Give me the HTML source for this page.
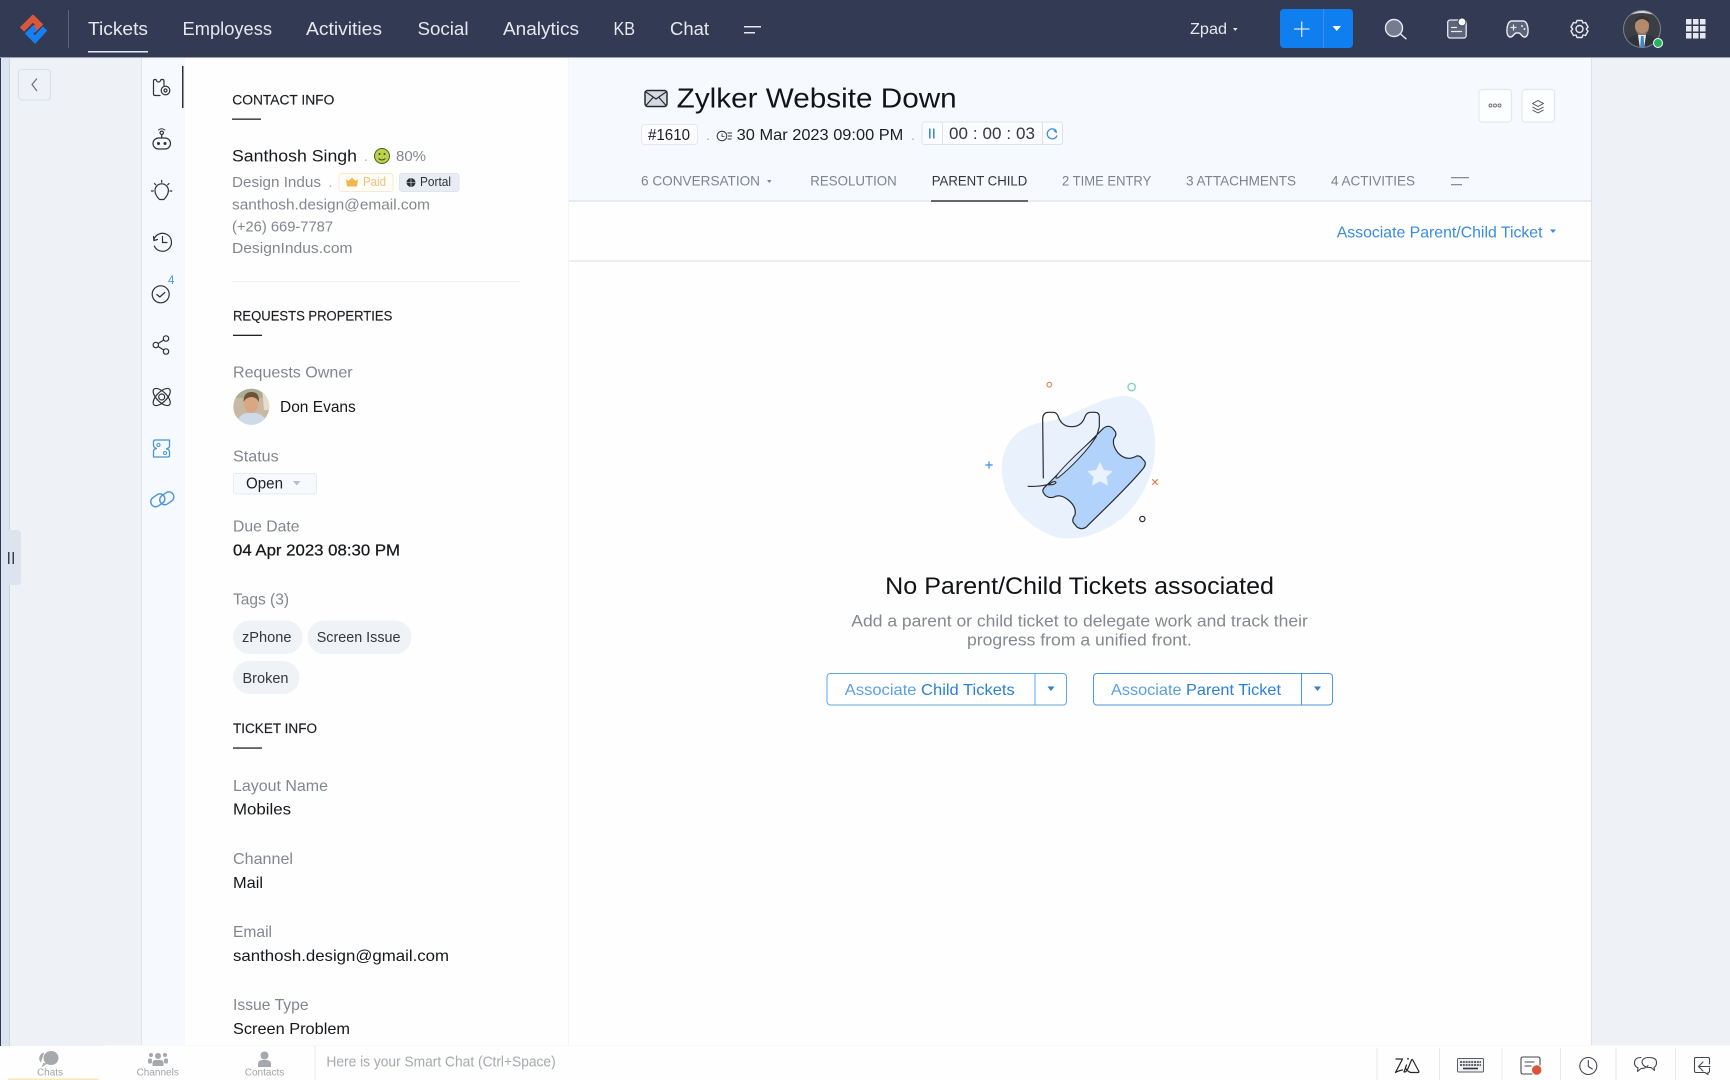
<!DOCTYPE html>
<html lang="en">
<head>
<meta charset="utf-8">
<title>Zylker Website Down</title>
<style>
html,body{margin:0;padding:0;background:#fff;width:1730px;height:1080px;overflow:hidden}
svg{display:block}
text{font-family:"Liberation Sans",Arial,sans-serif}
.n{font-size:18.5px;fill:#e6e8ee}
.h{font-size:13.5px;fill:#1c1e22;stroke:#1c1e22;stroke-width:.15}
.l{font-size:16px;fill:#82868f}
.v{font-size:16px;fill:#15171a}
.g{font-size:15px;fill:#83878e}
.t{font-size:14px;fill:#7f838a}
.ic{fill:none;stroke:#2f3237;stroke-width:1.2;stroke-linecap:round;stroke-linejoin:round}
.bl{fill:none;stroke:#4a94dc;stroke-width:1.3;stroke-linecap:round;stroke-linejoin:round}
.w{fill:none;stroke:#e8eaf0;stroke-width:1.4;stroke-linecap:round;stroke-linejoin:round}
.b{fill:none;stroke:#44474d;stroke-width:1.1;stroke-linecap:round;stroke-linejoin:round}
</style>
</head>
<body>
<svg width="1730" height="1080" viewBox="0 0 1730 1080" xmlns="http://www.w3.org/2000/svg">
<!-- backgrounds -->
<rect width="1730" height="1080" fill="#eef2f6"/>
<rect x="0" y="57" width="1" height="1023" fill="#333b54"/>
<rect x="1" y="57" width="8" height="1023" fill="#dbe4f1"/>
<rect x="9" y="57" width="1" height="1023" fill="#ccd4df"/>
<rect x="141" y="57" width="44" height="1023" fill="#f6f9fe"/>
<rect x="141" y="57" width="1" height="1023" fill="#e0e5eb"/>
<rect x="185" y="57" width="383" height="1023" fill="#fefefe"/>
<rect x="568" y="57" width="1" height="1023" fill="#f4f5f7"/>
<rect x="569" y="57" width="1022" height="1023" fill="#fefefe"/>
<rect x="569" y="57" width="1022" height="143" fill="#f6f9fe"/>
<rect x="569" y="200" width="1022" height="2" fill="#e8ecf2"/>
<rect x="569" y="260" width="1022" height="2" fill="#eceef2"/>
<rect x="1591" y="57" width="1" height="1023" fill="#dde2ea"/>

<!-- header -->
<rect width="1730" height="57" fill="#333b54"/>
<rect y="57" width="1730" height="1" fill="#9aa0ad"/>
<path d="M22 29.500 L33 18.500 L39 24.500 L33 30.500" fill="none" stroke="#d9583c" stroke-width="6"/>
<path d="M45 28.500 L35 39.500 L29 33.500 L35 27.500" fill="none" stroke="#1780f0" stroke-width="6"/>
<rect x="68" y="10" width="1" height="38" fill="#5a6278"/>
<text class="n" x="88" y="35" textLength="60" lengthAdjust="spacingAndGlyphs">Tickets</text>
<rect x="88" y="51" width="60" height="1.500" fill="#e6e8ee"/>
<text class="n" x="182.500" y="35" textLength="89.500" lengthAdjust="spacingAndGlyphs">Employess</text>
<text class="n" x="306" y="35" textLength="76" lengthAdjust="spacingAndGlyphs">Activities</text>
<text class="n" x="417.500" y="35" textLength="51" lengthAdjust="spacingAndGlyphs">Social</text>
<text class="n" x="503" y="35" textLength="76" lengthAdjust="spacingAndGlyphs">Analytics</text>
<text class="n" x="613.500" y="35" textLength="21.500" lengthAdjust="spacingAndGlyphs">KB</text>
<text class="n" x="670" y="35" textLength="39" lengthAdjust="spacingAndGlyphs">Chat</text>
<rect x="744" y="26" width="17" height="1.500" fill="#e6e8ee"/><rect x="744" y="32" width="11" height="1.500" fill="#e6e8ee"/>
<text x="1190" y="34" font-size="16" fill="#e6e8ee" textLength="37" lengthAdjust="spacingAndGlyphs">Zpad</text>
<path d="M1233 28 h4.500 l-2.250 3z" fill="#e6e8ee"/>
<rect x="1280" y="9" width="73" height="39" rx="4" fill="#0f7ff0"/>
<rect x="1323" y="9" width="1" height="39" fill="#3a90ec"/>
<path d="M1294 29 h15.500 M1301.700 21.500 v15.500" stroke="#d9e8fb" stroke-width="1.300" fill="none"/>
<path d="M1332.500 26 h8.500 l-4.250 5z" fill="#fff"/>
<circle cx="1394" cy="28" r="8.500" fill="#757c90" stroke="#e8eaf0" stroke-width="1.400"/>
<path d="M1400.500 34 L1406 38.800" class="w"/>
<rect x="1447.700" y="20" width="18.500" height="18" rx="2.500" fill="#5c6479" stroke="#e8eaf0" stroke-width="1.300"/>
<path d="M1451.500 27.500 h5 M1451.500 31.500 h10" class="w" style="stroke-width:1.200"/>
<circle cx="1462" cy="22" r="4" fill="#fff" stroke="#333b54" stroke-width="1"/>
<path d="M1512 21 h11 c3 0 4.500 3 5 8 c.5 6-1.500 8-3.500 8 c-2.500 0-4-4-5.500-4 h-3 c-1.500 0-3 4-5.500 4 c-2 0-4-2-3.500-8 c.5-5 2-8 5-8z" class="w" style="fill:#5c6479"/>
<path d="M1511 27.500 h5 M1513.500 25 v5" class="w" style="stroke-width:1.200"/>
<circle cx="1522" cy="26" r="1" fill="#e8eaf0"/><circle cx="1524.500" cy="29" r="1" fill="#e8eaf0"/>
<path d="M1577 20.500 h5 l1 2.500 l2.500 -.5 l2.500 4.500 l-1.700 2 l1.700 2 l-2.500 4.500 l-2.500 -.5 l-1 2.500 h-5 l-1 -2.500 l-2.500 .5 l-2.500 -4.500 l1.700 -2 l-1.700 -2 l2.500 -4.500 l2.500 .5z" class="w"/>
<circle cx="1579.500" cy="29" r="3.500" class="w"/>
<!-- profile avatar -->
<defs>
<clipPath id="a1"><circle cx="1642" cy="29" r="18.500"/></clipPath>
<clipPath id="a2"><circle cx="251.300" cy="406.700" r="18"/></clipPath>
</defs>
<g clip-path="url(#a1)">
<rect x="1622" y="9" width="40" height="40" fill="#3b3e44"/>
<path d="M1630 10 h24 v5 q-12 -4 -24 0z" fill="#d8d6cf"/>
<ellipse cx="1642" cy="26" rx="7" ry="9" fill="#b48a6e"/>
<path d="M1635 23 q7 -8 14 0 l0 -4 q-7 -6 -14 0z" fill="#3a332e"/>
<path d="M1637 31 q5 4 10 0 l-1 4 h-8z" fill="#8a7a6c"/>
<path d="M1623 50 q2 -13 13 -15 h12 q11 2 13 15z" fill="#2f333b"/>
<path d="M1638 35 h8 l-2 14 h-4z" fill="#e8ecf0"/>
<path d="M1641 36 h2.500 l1 13 h-4.500z" fill="#3e86c8"/>
</g>
<circle cx="1642" cy="29" r="18.500" fill="none" stroke="#7a8092" stroke-width="1"/>
<circle cx="1658" cy="43" r="4.500" fill="#27b55c" stroke="#fff" stroke-width="1"/>
<g fill="#e6e8ee">
<rect x="1686" y="19" width="5.500" height="5.500"/><rect x="1693" y="19" width="5.500" height="5.500"/><rect x="1700" y="19" width="5.500" height="5.500"/>
<rect x="1686" y="26" width="5.500" height="5.500"/><rect x="1693" y="26" width="5.500" height="5.500"/><rect x="1700" y="26" width="5.500" height="5.500"/>
<rect x="1686" y="33" width="5.500" height="5.500"/><rect x="1693" y="33" width="5.500" height="5.500"/><rect x="1700" y="33" width="5.500" height="5.500"/>
</g>

<!-- back button -->
<rect x="18.500" y="69.500" width="32" height="30.500" rx="3" fill="#eef2f6" stroke="#d9dfe8" stroke-width="1"/>
<path d="M37 78.500 L32 84.500 L37 91" fill="none" stroke="#6a6f78" stroke-width="1.200"/>
<!-- collapse handle -->
<path d="M9 530 h8 q4 0 4 4 v47 q0 4 -4 4 h-8z" fill="#dde4ee"/>
<rect x="8" y="552" width="1.500" height="12" fill="#3c4048"/><rect x="12.500" y="552" width="1.500" height="12" fill="#3c4048"/>

<!-- rail icons -->
<rect x="182" y="66" width="1.500" height="42" fill="#333"/>
<path d="M160 95.500 h-5 q-1.500 0 -1.500 -1.500 v-13 q0 -1.500 1.500 -1.500 h1 q.8 2.500 2.500 2.500 q1.700 0 2.500 -2.500 h1.500 q1.500 0 1.500 1.500 v4.500" class="ic"/>
<circle cx="165.500" cy="90.500" r="4.300" class="ic" stroke-dasharray="2 .6"/><circle cx="165.500" cy="90.500" r="1.500" class="ic"/>
<rect x="153" y="138" width="17.500" height="11" rx="5.500" class="ic"/>
<circle cx="158.500" cy="143.500" r="1.500" fill="#2b2e33"/><circle cx="165" cy="143.500" r="1.500" fill="#2b2e33"/>
<path d="M161.700 138 v-3.500" class="ic"/><circle cx="161.700" cy="132.800" r="1.700" class="ic"/>
<path d="M158.500 130 q3.200 -2.500 6.400 0" class="ic" style="stroke-width:.9"/>
<path d="M159.500 199.500 q-4.500 -4.500 -4.500 -9 a6.700 6.700 0 0 1 13.400 0 q0 4.500 -4.500 9z" class="ic"/>
<path d="M151.500 191 h1.800 M170 191 h1.800 M154.500 183.500 l1.300 1.300 M169 183.500 l-1.300 1.300 M161.700 180.500 v1.800" class="ic"/>
<path d="M153.800 240 a9 9 0 1 1 .5 6" class="ic"/>
<path d="M153.500 236.500 l.5 4 l3.500 -1" class="ic"/>
<path d="M162.500 236.500 v6 h4.500" class="ic"/>
<circle cx="160.700" cy="294.300" r="8.500" class="ic"/>
<path d="M156.800 294.500 l3 2.500 l5 -4.500" class="ic"/>
<text x="168" y="284" font-size="11.500" fill="#4a9be0">4</text>
<circle cx="166" cy="338.500" r="2.700" class="ic"/><circle cx="155.800" cy="345" r="2.700" class="ic"/><circle cx="166" cy="351.500" r="2.700" class="ic"/>
<path d="M158.200 343.500 l5.500 -3.500 M158.200 346.500 l5.500 3.500" class="ic"/>
<g transform="translate(161.700 397)">
<ellipse rx="11" ry="5" transform="rotate(45)" class="ic"/>
<ellipse rx="11" ry="5" transform="rotate(-45)" class="ic"/>
<circle r="3" class="ic"/>
</g>
<path d="M155.500 440 h14 v6 q0 2 -3 2.800 q3 1 3 3 v3.700 q0 1.500 -1.500 1.500 h-14.500 v-6 q0 -1.800 3 -2.500 q-3 -1 -3 -3 v-4 q0 -1.500 2 -1.500z" class="bl"/>
<circle cx="158.500" cy="445" r="1.500" class="bl" style="stroke-width:1"/><circle cx="165" cy="453" r="1.500" class="bl" style="stroke-width:1"/>
<rect x="-7.500" y="-5" width="15" height="10" rx="5" transform="translate(157.800 500.300) rotate(-35)" class="bl" style="stroke-width:1.400"/>
<rect x="-7.500" y="-5" width="15" height="10" rx="5" transform="translate(166.800 498.300) rotate(-35)" class="bl" style="stroke-width:1.400"/>

<!-- contact info -->
<text class="h" x="232.300" y="104.500" textLength="102" lengthAdjust="spacingAndGlyphs">CONTACT INFO</text>
<rect x="232" y="118.500" width="29" height="1.300" fill="#222"/>
<text x="232" y="161.500" font-size="17" fill="#16181b" textLength="125" lengthAdjust="spacingAndGlyphs">Santhosh Singh</text>
<text x="364" y="161" font-size="14" fill="#a9adb3">.</text>
<circle cx="382" cy="156" r="7.500" fill="#b9d34a" stroke="#4b5a20" stroke-width="1"/>
<circle cx="379.500" cy="154" r="1" fill="#3b4718"/><circle cx="384.500" cy="154" r="1" fill="#3b4718"/>
<path d="M378.500 158.500 q3.500 3 7 0" fill="none" stroke="#3b4718" stroke-width="1"/>
<text x="396" y="161" font-size="14.500" fill="#85898f" textLength="30" lengthAdjust="spacingAndGlyphs">80%</text>
<text class="g" x="232" y="187" textLength="89" lengthAdjust="spacingAndGlyphs">Design Indus</text>
<text x="328.500" y="187" font-size="14" fill="#a9adb3">.</text>
<rect x="339" y="173.500" width="54" height="18" rx="2.500" fill="#fffdf8" stroke="#f8ead0" stroke-width="1"/>
<path d="M346 179 l2.500 2 l3.500 -3.500 l3.500 3.500 l2.500 -2 l-1 7.500 h-10z" fill="#f3b54a"/>
<text x="363" y="186" font-size="12.500" fill="#eec17a" textLength="23" lengthAdjust="spacingAndGlyphs">Paid</text>
<rect x="399.500" y="173.500" width="59.500" height="18" rx="2.500" fill="#e8edf5" stroke="#dee4ed" stroke-width="1"/>
<circle cx="411" cy="182.500" r="4.500" fill="#2e3238"/>
<path d="M406.500 182.500 h9 M411 178 v9" stroke="#e8edf5" stroke-width=".6"/>
<text x="420" y="186" font-size="12.500" fill="#2e3238" textLength="31" lengthAdjust="spacingAndGlyphs">Portal</text>
<text class="g" x="232" y="209.500" textLength="198" lengthAdjust="spacingAndGlyphs">santhosh.design@email.com</text>
<text class="g" x="232" y="231.500" textLength="101" lengthAdjust="spacingAndGlyphs">(+26) 669-7787</text>
<text class="g" x="232" y="253" textLength="120.500" lengthAdjust="spacingAndGlyphs">DesignIndus.com</text>
<rect x="232" y="281" width="288" height="1" fill="#f0f2f5"/>

<!-- request props -->
<text class="h" x="233" y="320.500" textLength="159.300" lengthAdjust="spacingAndGlyphs">REQUESTS PROPERTIES</text>
<rect x="233" y="334.700" width="29" height="1.300" fill="#222"/>
<text class="l" x="233" y="377.500" textLength="119.600" lengthAdjust="spacingAndGlyphs">Requests Owner</text>
<g clip-path="url(#a2)">
<rect x="233" y="388" width="37" height="37" fill="#c9b9a2"/>
<rect x="233" y="388" width="37" height="10" fill="#a9ad95"/>
<path d="M262 388 h8 v22 h-6z" fill="#e6dccb"/>
<ellipse cx="251" cy="404" rx="7" ry="9" fill="#d8a784"/>
<path d="M243.500 402 q0 -10 8 -10 q8 0 7.500 10 q-3 -5 -7.500 -5 q-5 0 -8 5z" fill="#6f5136"/>
<path d="M236 426 q2 -12 11 -13 h9 q9 1 11 13z" fill="#cddbe8"/>
</g>
<text class="v" x="280" y="411.800" textLength="75.800" lengthAdjust="spacingAndGlyphs">Don Evans</text>
<text class="l" x="233" y="461.500" textLength="45.700" lengthAdjust="spacingAndGlyphs">Status</text>
<rect x="233.500" y="473.500" width="83" height="20.500" rx="2" fill="#f6f9fe" stroke="#e6ebf2" stroke-width="1"/>
<text x="246" y="488.300" font-size="15.500" fill="#1e2024" textLength="37" lengthAdjust="spacingAndGlyphs">Open</text>
<path d="M293 481 h7.500 l-3.750 4.500z" fill="#b9bec6"/>
<text class="l" x="233" y="531.500" textLength="66.500" lengthAdjust="spacingAndGlyphs">Due Date</text>
<text class="v" x="233" y="555.700" textLength="167" lengthAdjust="spacingAndGlyphs" style="stroke:#15171a;stroke-width:.25">04 Apr 2023 08:30 PM</text>
<text class="l" x="233" y="604.700" textLength="56" lengthAdjust="spacingAndGlyphs">Tags (3)</text>
<rect x="233" y="620.500" width="69.500" height="33.500" rx="16.750" fill="#eff2f6"/>
<rect x="307.500" y="620.500" width="104" height="33.500" rx="16.750" fill="#eff2f6"/>
<rect x="233" y="661" width="66.500" height="33" rx="16.500" fill="#eff2f6"/>
<text x="242" y="642" font-size="15" fill="#33363b" textLength="49.500" lengthAdjust="spacingAndGlyphs">zPhone</text>
<text x="316.700" y="642" font-size="15" fill="#33363b" textLength="83.800" lengthAdjust="spacingAndGlyphs">Screen Issue</text>
<text x="242.500" y="682.800" font-size="15" fill="#33363b" textLength="46" lengthAdjust="spacingAndGlyphs">Broken</text>

<!-- ticket info -->
<text class="h" x="233" y="732.800" textLength="84" lengthAdjust="spacingAndGlyphs">TICKET INFO</text>
<rect x="233" y="747.400" width="29" height="1.300" fill="#222"/>
<text class="l" x="233" y="791" textLength="95" lengthAdjust="spacingAndGlyphs">Layout Name</text>
<text class="v" x="233" y="814.700" textLength="58" lengthAdjust="spacingAndGlyphs">Mobiles</text>
<text class="l" x="233" y="864" textLength="60" lengthAdjust="spacingAndGlyphs">Channel</text>
<text class="v" x="233" y="888" textLength="30" lengthAdjust="spacingAndGlyphs">Mail</text>
<text class="l" x="233" y="937" textLength="39" lengthAdjust="spacingAndGlyphs">Email</text>
<text class="v" x="233" y="961" textLength="216" lengthAdjust="spacingAndGlyphs">santhosh.design@gmail.com</text>
<text class="l" x="233" y="1010" textLength="75.600" lengthAdjust="spacingAndGlyphs">Issue Type</text>
<text class="v" x="233" y="1034" textLength="117" lengthAdjust="spacingAndGlyphs">Screen Problem</text>

<!-- title -->
<rect x="645" y="90.500" width="22" height="16" rx="2.500" fill="#d5dae2" stroke="#26282c" stroke-width="1.500"/>
<path d="M646 92 L656 99 L666 92 M646 105.500 L653 97.500 M666 105.500 L659 97.500" fill="none" stroke="#26282c" stroke-width="1.200"/>
<text x="676.700" y="107.700" font-size="28" fill="#121417" textLength="280" lengthAdjust="spacingAndGlyphs">Zylker Website Down</text>
<rect x="641.500" y="124.500" width="56" height="20" rx="3" fill="#fdfdff" stroke="#e4e8ee" stroke-width="1"/>
<text x="648" y="140" font-size="16" fill="#1c1e22" textLength="42" lengthAdjust="spacingAndGlyphs">#1610</text>
<text x="706" y="140" font-size="14" fill="#a9adb3">.</text>
<circle cx="722" cy="136" r="4.800" fill="none" stroke="#2e3136" stroke-width="1"/>
<path d="M722 133.500 v3 h2.500" fill="none" stroke="#2e3136" stroke-width=".8"/>
<path d="M727.500 133 h4.500 M728 136 h4 M727.500 139 h4" stroke="#2e3136" stroke-width=".9"/>
<text x="736.700" y="140" font-size="16" fill="#1c1e22" textLength="166.600" lengthAdjust="spacingAndGlyphs">30 Mar 2023 09:00 PM</text>
<text x="911" y="140" font-size="14" fill="#a9adb3">.</text>
<rect x="922" y="122" width="140.500" height="22.500" rx="2.500" fill="#fbfcff" stroke="#dde3ec" stroke-width="1"/>
<rect x="942" y="122" width="1" height="22.500" fill="#dde3ec"/><rect x="1042" y="122" width="1" height="22.500" fill="#dde3ec"/>
<rect x="929" y="128.500" width="1.600" height="10" fill="#3d8ddc"/><rect x="933" y="128.500" width="1.600" height="10" fill="#3d8ddc"/>
<text x="949" y="139" font-size="17" fill="#33363b" textLength="86" lengthAdjust="spacing">00 : 00 : 03</text>
<path d="M1056 130.500 a5 5 0 1 0 1 5" fill="none" stroke="#3d8ddc" stroke-width="1.300"/>
<path d="M1053 130.800 l3.500 -.8 l.5 3.500z" fill="#3d8ddc"/>

<!-- tabs -->
<text class="t" x="641" y="185.700" textLength="119" lengthAdjust="spacingAndGlyphs">6 CONVERSATION</text>
<path d="M767 180 h4.500 l-2.250 3z" fill="#7f838a"/>
<text class="t" x="810.300" y="185.700" textLength="86.400" lengthAdjust="spacingAndGlyphs">RESOLUTION</text>
<text class="t" x="931.700" y="185.700" textLength="95.600" lengthAdjust="spacingAndGlyphs" style="fill:#33363b">PARENT CHILD</text>
<rect x="931" y="200" width="97" height="2" fill="#666"/>
<text class="t" x="1062" y="185.700" textLength="89.300" lengthAdjust="spacingAndGlyphs">2 TIME ENTRY</text>
<text class="t" x="1186" y="185.700" textLength="110" lengthAdjust="spacingAndGlyphs">3 ATTACHMENTS</text>
<text class="t" x="1331" y="185.700" textLength="84" lengthAdjust="spacingAndGlyphs">4 ACTIVITIES</text>
<rect x="1451" y="177" width="18" height="1.300" fill="#8a8e95"/><rect x="1451" y="184" width="11" height="1.300" fill="#8a8e95"/>
<rect x="1479" y="89.500" width="32.500" height="32.500" rx="3" fill="#fdfeff" stroke="#e4e8ee" stroke-width="1.200"/>
<circle cx="1490.500" cy="105.500" r="1.500" fill="none" stroke="#6a6e75" stroke-width=".9"/><circle cx="1495" cy="105.500" r="1.500" fill="none" stroke="#6a6e75" stroke-width=".9"/><circle cx="1499.500" cy="105.500" r="1.500" fill="none" stroke="#6a6e75" stroke-width=".9"/>
<rect x="1522" y="89.500" width="32.500" height="32.500" rx="3" fill="#fdfeff" stroke="#e4e8ee" stroke-width="1.200"/>
<path d="M1538 100.500 l5.500 3 l-5.500 3 l-5.500 -3z M1532.500 107 l5.500 3 l5.500 -3 M1532.500 110 l5.500 3 l5.500 -3" fill="none" stroke="#44484e" stroke-width=".9" stroke-linejoin="round"/>
<text x="1336.700" y="237.300" font-size="16" fill="#3a8be0" textLength="205.800" lengthAdjust="spacingAndGlyphs">Associate Parent/Child Ticket</text>
<path d="M1550 229.500 h6 l-3 3.500z" fill="#3a8be0"/>

<!-- illustration -->
<g transform="translate(960 360) scale(.33333)">
<path d="M125 320 C130 240 180 195 260 185 C340 175 420 105 500 108 C560 115 590 190 585 270 C580 370 520 470 430 510 C380 535 320 545 270 525 C190 490 125 420 125 320Z" fill="#e8f1fc"/>
<path d="M250 355 L248 175 Q250 157 265 157 L280 157 Q290 157 295 170 Q305 200 335 200 Q365 200 375 170 Q380 157 392 157 L405 157 Q418 157 418 172 L418 200 L410 228" fill="none" stroke="#26282c" stroke-width="3.500" stroke-linejoin="round"/>
<path d="M430 205 Q447 192 460 207 L466 215 Q471 225 462 235 Q455 255 475 280 Q500 305 530 288 Q540 286 548 297 L555 305 Q558 315 550 325 C500 385 430 450 380 500 Q365 512 350 500 L340 488 Q335 478 345 465 Q350 440 325 420 Q300 400 280 412 Q265 415 255 405 L250 398 Q245 388 258 378 Z" fill="#b1d2fa" stroke="#26282c" stroke-width="3.500" stroke-linejoin="round"/>
<path d="M288 352 C290 340 350 280 410 228 C385 270 330 325 296 352 Q288 357 288 352Z" fill="#d6e7fc" stroke="#26282c" stroke-width="3"/>
<path d="M203 379 C230 380 250 378 268 372 Q285 360 288 368 Q282 376 264 374" fill="#d6e7fc" stroke="#26282c" stroke-width="3.500"/>
<path d="M420 308 L431 331 L456 334 L438 351 L443 375 L420 363 L397 375 L402 351 L384 334 L409 331Z" fill="#eaf2fc" stroke="#eaf2fc" stroke-width="2" stroke-linejoin="round"/>
<circle cx="268" cy="74" r="7" fill="none" stroke="#d98a60" stroke-width="3.500"/>
<circle cx="515" cy="81" r="11" fill="none" stroke="#7fd0c8" stroke-width="4"/>
<path d="M76 315 h22 M87 304 v22" stroke="#3a8fe8" stroke-width="3.500"/>
<path d="M577 358 L593 374 M593 358 L577 374" stroke="#dd7a50" stroke-width="3.500"/>
<circle cx="547" cy="477" r="8" fill="none" stroke="#26282c" stroke-width="3.500"/>
</g>

<!-- empty state -->
<text x="885.200" y="594" font-size="24" fill="#111316" textLength="388.800" lengthAdjust="spacingAndGlyphs">No Parent/Child Tickets associated</text>
<text x="851.300" y="626.500" font-size="17" fill="#84888f" textLength="456.500" lengthAdjust="spacingAndGlyphs">Add a parent or child ticket to delegate work and track their</text>
<text x="967" y="645.500" font-size="17" fill="#84888f" textLength="224.800" lengthAdjust="spacingAndGlyphs">progress from a unified front.</text>
<rect x="827" y="673.500" width="239.500" height="31.500" rx="3.500" fill="#fff" stroke="#5ea6e6" stroke-width="1"/>
<rect x="1034.500" y="673.500" width="1" height="31.500" fill="#5ea6e6"/>
<text x="844.800" y="695" font-size="16" fill="#5a9fe0" textLength="170" lengthAdjust="spacingAndGlyphs">Associate <tspan fill="#2a7fd6">Child Tickets</tspan></text>
<path d="M1047.500 686.500 h7 l-3.500 4.500z" fill="#2a7fd6"/>
<rect x="1093.500" y="673.500" width="239" height="31.500" rx="3.500" fill="#fff" stroke="#4a98e0" stroke-width="1"/>
<rect x="1301" y="673.500" width="1" height="31.500" fill="#4a98e0"/>
<text x="1111" y="695" font-size="16" fill="#5a9fe0" textLength="170" lengthAdjust="spacingAndGlyphs">Associate <tspan fill="#2a7fd6">Parent Ticket</tspan></text>
<path d="M1314 686.500 h7 l-3.500 4.500z" fill="#2a7fd6"/>

<!-- bottom bar -->
<rect x="0" y="1046" width="1730" height="34" fill="#fefefe"/>
<rect x="105" y="1045" width="1625" height="1" fill="#f7f8f9"/>
<rect x="8" y="1078.500" width="91" height="1.500" fill="#fbe9b5"/>
<path d="M41 1062 a7 6 0 0 1 3 -9 M44 1063 l-1.500 3 l4 -2.500" fill="#a5a8ad" stroke="#a5a8ad" stroke-width="1"/>
<ellipse cx="51" cy="1058" rx="7.500" ry="7" fill="#a5a8ad"/>
<text x="50" y="1075.700" font-size="10" fill="#a0a3a8" text-anchor="middle">Chats</text>
<circle cx="158" cy="1056" r="3" fill="#a5a8ad"/><circle cx="151" cy="1055" r="2" fill="#a5a8ad"/><circle cx="165" cy="1055" r="2" fill="#a5a8ad"/>
<path d="M152.500 1066 v-3 q0 -3 3 -3 h5 q3 0 3 3 v3z" fill="#a5a8ad"/><rect x="148" y="1058.500" width="4" height="5" rx="1.500" fill="#a5a8ad"/><rect x="164" y="1058.500" width="4" height="5" rx="1.500" fill="#a5a8ad"/>
<text x="157.700" y="1075.700" font-size="10" fill="#a0a3a8" text-anchor="middle">Channels</text>
<circle cx="264.500" cy="1055.500" r="4" fill="#a5a8ad"/>
<path d="M258 1067 v-3 q0 -3.500 4 -4 h5 q4 .5 4 4 v3z" fill="#a5a8ad"/>
<text x="264.500" y="1075.700" font-size="10" fill="#a0a3a8" text-anchor="middle">Contacts</text>
<rect x="314.500" y="1046" width="1" height="34" fill="#e6e8ec"/>
<text x="326.400" y="1066.700" font-size="14.500" fill="#a6a9ae" textLength="229.300" lengthAdjust="spacingAndGlyphs">Here is your Smart Chat (Ctrl+Space)</text>
<g fill="#e6e8ec">
<rect x="1376.500" y="1048" width="1" height="32"/><rect x="1439" y="1048" width="1" height="32"/><rect x="1501.500" y="1048" width="1" height="32"/><rect x="1560" y="1048" width="1" height="32"/><rect x="1615.500" y="1048" width="1" height="32"/><rect x="1675" y="1048" width="1" height="32"/>
</g>
<path d="M1396 1059 h6.500 l-7 13.500 q3.500 -2 7 -2.500 M1404 1072 l2.500 -7" class="b" style="stroke-width:1.200;stroke:#26282c"/>
<path d="M1405 1072 q2 -.5 4 -6 l2.500 -6 q.5 -1 1.200 0 l6 11 q.6 1.500 -1 1.500 h-7 q-3 -1 -5 -4" class="b" style="stroke-width:1.200;stroke:#26282c"/>
<circle cx="1408" cy="1058.800" r=".9" fill="#26282c"/>
<rect x="1457.500" y="1058.500" width="26" height="13.500" rx="1" fill="#eef0f3" stroke="#5a5e65" stroke-width="1"/>
<path d="M1460 1062 h21 M1460 1065 h21" stroke="#33363b" stroke-width="1.600" stroke-dasharray="2 .8"/>
<path d="M1463 1068.500 h15" stroke="#33363b" stroke-width="1.600"/>
<path d="M1532 1074 h-9 q-2 0 -2 -2 v-13 q0 -2 2 -2 h15 q2 0 2 2 v6" class="b"/>
<path d="M1525 1062 h9 M1525 1066 h6" class="b"/>
<circle cx="1536.700" cy="1070" r="4.700" fill="#d9553a"/>
<circle cx="1588.300" cy="1066" r="8.500" class="b"/>
<path d="M1588.300 1060.500 v6 l4 2.500" class="b"/>
<path d="M1641 1057.500 q-6.500 0 -6.500 5.500 q0 3.500 3.500 4.800 l-.5 3.700 l3.500 -3 q5.500 0 7 -3" class="b"/>
<path d="M1649 1057.500 q7.500 0 7.500 5 q0 3.800 -2.500 4.800 l.5 3 l-3.500 -2.800 q-7.500 .5 -9 -5 q0 -5 7 -5z" class="b"/>
<path d="M1709.500 1064 v-5 q0 -1.500 -1.500 -1.500 h-12 q-1.500 0 -1.500 1.500 v12 q0 1.500 1.500 1.500 h9 l3 2 v-2 h.5 q1 0 1 -1.500 v-3" class="b"/>
<path d="M1710 1066.500 h-11 M1703 1062 l-4.500 4.500 l4.500 4.500" class="b"/>
</svg>
</body>
</html>
